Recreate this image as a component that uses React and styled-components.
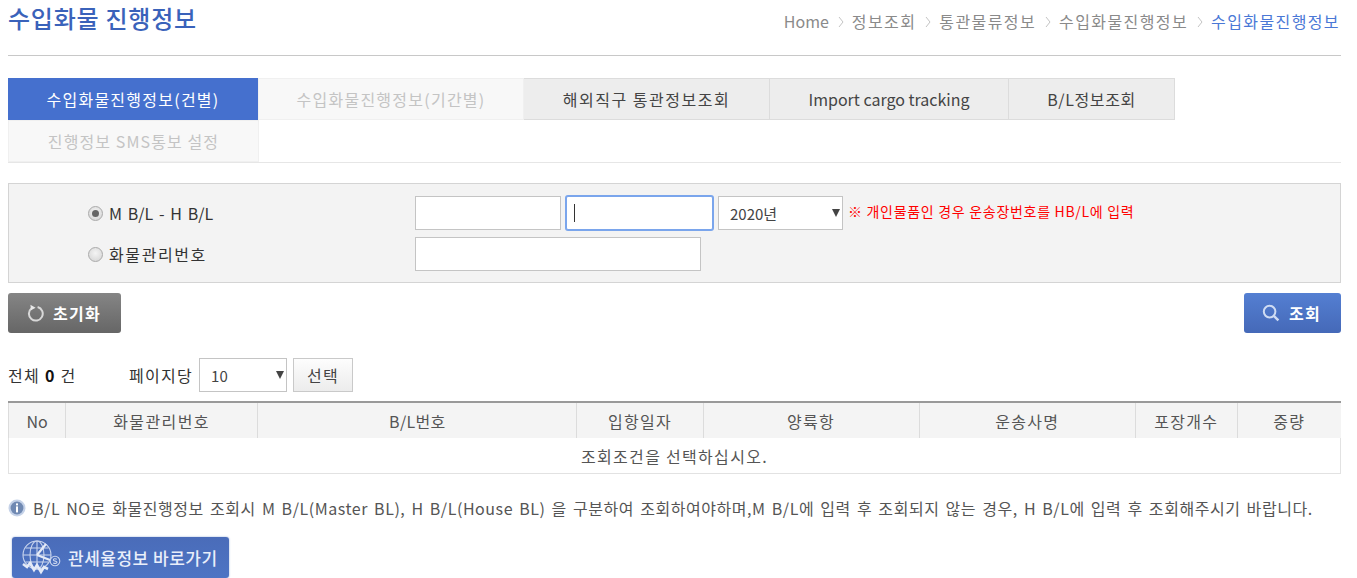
import styled, { createGlobalStyle } from "styled-components";

const tabs = [
  { label: "수입화물진행정보(건별)", width: 250, kind: "active", spacing: 1.25 },
  { label: "수입화물진행정보(기간별)", width: 266, kind: "off", spacing: 1.25 },
  { label: "해외직구 통관정보조회", width: 246, kind: "normal", spacing: 1.5 },
  { label: "Import cargo tracking", width: 239, kind: "normal", spacing: 0 },
  { label: "B/L정보조회", width: 166, kind: "normal", spacing: 0.6 },
  { label: "진행정보 SMS통보 설정", width: 251, kind: "off", spacing: 1.1 },
];

const columns = [
  { label: "No", width: 57, spacing: 0 },
  { label: "화물관리번호", width: 192, spacing: 1.4 },
  { label: "B/L번호", width: 319, spacing: 0.3 },
  { label: "입항일자", width: 126, spacing: 1.3 },
  { label: "양륙항", width: 216, spacing: 1.3 },
  { label: "운송사명", width: 216, spacing: 1.3 },
  { label: "포장개수", width: 102, spacing: 1.3 },
  { label: "중량", width: 103, spacing: 1.3 },
];

const crumbs = [
  { label: "Home", spacing: 0 },
  { label: "정보조회", spacing: 1.4 },
  { label: "통관물류정보", spacing: 1.4 },
  { label: "수입화물진행정보", spacing: 1.4 },
];

const App = () => {
  return (
    <>
      <GlobalStyle />
      <Page>
        <TitleBar>
          <Title>수입화물 진행정보</Title>
          <Breadcrumb>
            {crumbs.map((c) => (
              <Crumb key={c.label} $spacing={c.spacing}>
                {c.label}
                <Chevron viewBox="0 0 6 12">
                  <path d="M1 1l4 5-4 5" fill="none" stroke="#c4c4c4" strokeWidth="1" />
                </Chevron>
              </Crumb>
            ))}
            <CurrentCrumb>수입화물진행정보</CurrentCrumb>
          </Breadcrumb>
        </TitleBar>

        <TabList>
          {tabs.map((t) => (
            <Tab key={t.label} $width={t.width} $kind={t.kind} $spacing={t.spacing}>
              {t.label}
            </Tab>
          ))}
        </TabList>

        <SearchBox>
          <RadioColumn>
            <RadioLabel>
              <Radio type="radio" name="kind" defaultChecked />
              <LatinText>M B/L - H B/L</LatinText>
            </RadioLabel>
            <RadioLabel>
              <Radio type="radio" name="kind" />
              화물관리번호
            </RadioLabel>
          </RadioColumn>
          <FieldColumn>
            <FieldRow>
              <TextInput $width={146} />
              <FocusField>
                <TextInput $width={147} $focused />
                <Caret />
              </FocusField>
              <SelectWrap $width={125}>
                <Select defaultValue="2020">
                  <option value="2020">2020년</option>
                </Select>
              </SelectWrap>
              <Warning>※ 개인물품인 경우 운송장번호를 HB/L에 입력</Warning>
            </FieldRow>
            <FieldRow>
              <TextInput $width={286} />
            </FieldRow>
          </FieldColumn>
        </SearchBox>

        <ButtonRow>
          <ActionButton $variant="gray">
            <svg width="18" height="18" viewBox="0 0 18 18" fill="none">
              <path d="M5.6 4.2A6.9 6.9 0 1 0 11.6 3" stroke="#d8d8d8" strokeWidth="2" />
              <path d="M4.4 0.8l0.6 5.4 4.6-2.4z" fill="#e8e8e8" />
            </svg>
            초기화
          </ActionButton>
          <ActionButton $variant="blue">
            <svg width="18" height="18" viewBox="0 0 18 18" fill="none">
              <circle cx="7.6" cy="7.6" r="5.8" stroke="#cfdcf3" strokeWidth="2" />
              <path d="M11.8 11.8l4.6 4.6" stroke="#cfdcf3" strokeWidth="2.4" />
            </svg>
            조회
          </ActionButton>
        </ButtonRow>

        <CountRow>
          <Total>
            전체 <b>0</b> 건
          </Total>
          <PerPage>페이지당</PerPage>
          <SelectWrap $width={88}>
            <Select defaultValue="10">
              <option value="10">10</option>
            </Select>
          </SelectWrap>
          <PickButton>선택</PickButton>
        </CountRow>

        <Table>
          <thead>
            <tr>
              {columns.map((c) => (
                <Th key={c.label} $spacing={c.spacing} style={{ width: c.width }}>
                  {c.label}
                </Th>
              ))}
            </tr>
          </thead>
          <tbody>
            <tr>
              <Td colSpan={columns.length}>조회조건을 선택하십시오.</Td>
            </tr>
          </tbody>
        </Table>

        <Note>
          <svg width="18" height="18" viewBox="0 0 18 18">
            <circle cx="9" cy="9" r="8.5" fill="#c5d2e8" />
            <circle cx="9" cy="9" r="6.4" fill="#7089b2" />
            <rect x="8" y="4.4" width="2" height="2" fill="#fff" />
            <rect x="8" y="7.4" width="2" height="6" fill="#fff" />
          </svg>
          B/L NO로 화물진행정보 조회시 M B/L(Master BL), H B/L(House BL) 을 구분하여 조회하여야하며,M B/L에 입력 후 조회되지 않는 경우, H B/L에 입력 후 조회해주시기 바랍니다.
        </Note>

        <TariffLink>
          <svg width="40" height="36" viewBox="0 0 40 36" fill="none" stroke="#c9d5ee" strokeWidth="1.1">
            <circle cx="15" cy="15" r="14" />
            <ellipse cx="15" cy="15" rx="7" ry="14" />
            <path d="M1 15h28M3.5 8h23M3.5 22h23M15 1v28" />
            <path d="M15 15l9-11M15 15l13 5" strokeWidth="2.2" stroke="#e4eaf7" />
            <path d="M1 24l4 3 3-4 4 7 3-5 4 7 3-5 4 2" strokeWidth="2.6" stroke="#e4eaf7" />
            <circle cx="33" cy="21" r="4.8" fill="#4a6fbe" />
            <path d="M34.8 19.2c-1.8-1-3.6-.4-3.4.9.2 1.3 3.6.8 3.6 2.2 0 1.2-2 1.5-3.8.6" />
          </svg>
          관세율정보 바로가기
        </TariffLink>
      </Page>
    </>
  );
};

export default App;

const GlobalStyle = createGlobalStyle`
  html, body {
    margin: 0;
    padding: 0;
    background: #fff;
    overflow: hidden;
  }
  body {
    font-family: "Noto Sans CJK KR", "Noto Sans", sans-serif;
    font-size: 16px;
    letter-spacing: 1.3px;
    color: #333;
  }
`;

const Page = styled.div`
  width: 1333px;
  height: 578px;
  margin-left: 8px;
  overflow: hidden;
`;

const TitleBar = styled.header`
  height: 55px;
  border-bottom: 1px solid #c8c8c8;
  display: flex;
  justify-content: space-between;
  align-items: flex-start;
`;

const Title = styled.h1`
  margin: 0;
  font-size: 24px;
  line-height: normal;
  letter-spacing: 0.75px;
  font-weight: 500;
  color: #3a62ba;
`;

const Breadcrumb = styled.nav`
  display: flex;
  align-items: center;
  height: 42px;
  padding-right: 1px;
  color: #8a8a8a;
`;

const Crumb = styled.span`
  display: inline-flex;
  align-items: center;
  letter-spacing: ${(p) => p.$spacing}px;
`;

const Chevron = styled.svg`
  width: 6px;
  height: 12px;
  margin: 2px 8px 0 9px;
`;

const CurrentCrumb = styled.span`
  letter-spacing: 1.4px;
  color: #4a78d6;
`;

const TabList = styled.div`
  display: flex;
  flex-wrap: wrap;
  margin-top: 22px;
  height: 84px;
  border-bottom: 1px solid #e6e6e6;
`;

const tabColors = {
  active: "background:#4570ce;color:#fff;border-color:#4570ce;",
  off: "background:#f8f8f8;color:#c4c4c4;border-color:#f0f0f0;",
  normal: "background:#ededed;color:#444;border-color:#dcdcdc;",
};

const Tab = styled.div`
  width: ${(p) => p.$width}px;
  height: 42px;
  box-sizing: border-box;
  display: flex;
  align-items: center;
  justify-content: center;
  border: 1px solid;
  border-left-width: ${(p) => (p.$kind === "normal" ? 0 : 1)}px;
  letter-spacing: ${(p) => p.$spacing}px;
  ${(p) => tabColors[p.$kind]}
`;

const SearchBox = styled.section`
  height: 100px;
  box-sizing: border-box;
  margin-top: 20px;
  border: 1px solid #d4d4d4;
  background: #f3f3f3;
  display: flex;
  padding: 12px 0 0 79px;
`;

const RadioColumn = styled.div`
  width: 327px;
  display: flex;
  flex-direction: column;
  gap: 7px;
`;

const RadioLabel = styled.label`
  height: 34px;
  display: flex;
  align-items: center;
  gap: 6px;
  letter-spacing: 1.6px;
  color: #333;
`;

const LatinText = styled.span`
  letter-spacing: 0;
  word-spacing: 2.2px;
`;

const Radio = styled.input`
  appearance: none;
  width: 15px;
  height: 15px;
  margin: 0;
  border-radius: 50%;
  border: 1px solid #aaa;
  background: radial-gradient(circle at 50% 40%, #f4f4f4, #d2d2d2);
  position: relative;
  &:checked::after {
    content: "";
    position: absolute;
    left: 3px;
    top: 3px;
    width: 7px;
    height: 7px;
    border-radius: 50%;
    background: #666;
  }
`;

const FieldColumn = styled.div`
  display: flex;
  flex-direction: column;
  gap: 7px;
`;

const FieldRow = styled.div`
  display: flex;
  align-items: flex-start;
  gap: 5px;
`;

const TextInput = styled.input`
  width: ${(p) => p.$width}px;
  height: 34px;
  box-sizing: border-box;
  border: 1px solid ${(p) => (p.$focused ? "#7aa5ec" : "#c4c4c4")};
  box-shadow: ${(p) => (p.$focused ? "0 0 0 1px #7aa5ec" : "none")};
  border-radius: ${(p) => (p.$focused ? "2px" : "0")};
  background: #fff;
  outline: none;
  padding: 0 6px;
  caret-color: transparent;
`;

const FocusField = styled.div`
  position: relative;
  display: flex;
`;

const Caret = styled.span`
  position: absolute;
  left: 8px;
  top: 8px;
  width: 1px;
  height: 18px;
  background: #333;
`;

const SelectWrap = styled.div`
  position: relative;
  width: ${(p) => p.$width}px;
  height: 34px;
  &::after {
    content: "";
    position: absolute;
    right: 3px;
    top: 13px;
    border-left: 4px solid transparent;
    border-right: 4px solid transparent;
    border-top: 8px solid #444;
    pointer-events: none;
  }
`;

const Select = styled.select`
  appearance: none;
  width: 100%;
  height: 100%;
  box-sizing: border-box;
  border: 1px solid #c4c4c4;
  border-radius: 0;
  background: #fff;
  padding: 0 0 0 11px;
  font-family: inherit;
  font-size: 15px;
  letter-spacing: 0;
  color: #444;
  outline: none;
`;

const Warning = styled.span`
  font-size: 14px;
  line-height: 30px;
  letter-spacing: 0.7px;
  color: #f00;
`;

const ButtonRow = styled.div`
  display: flex;
  justify-content: space-between;
  margin-top: 10px;
`;

const ActionButton = styled.button`
  height: 40px;
  width: ${(p) => (p.$variant === "gray" ? 113 : 97)}px;
  border: 0;
  border-radius: 3px;
  padding: 0 2px 0 0;
  display: flex;
  align-items: center;
  justify-content: center;
  gap: 9px;
  font-family: inherit;
  font-size: 16px;
  letter-spacing: 1.3px;
  font-weight: 700;
  color: #fff;
  background: ${(p) =>
    p.$variant === "gray"
      ? "linear-gradient(#858585, #666)"
      : "linear-gradient(#547fd2, #4569b8)"};
`;

const CountRow = styled.div`
  display: flex;
  align-items: center;
  margin-top: 25px;
  height: 34px;
  color: #333;
`;

const Total = styled.span`
  width: 121px;
  b {
    color: #111;
  }
`;

const PerPage = styled.span`
  margin-right: 6px;
`;

const PickButton = styled.button`
  width: 60px;
  height: 34px;
  margin-left: 6px;
  border: 1px solid #c9c9c9;
  background: linear-gradient(#fdfdfd, #ececec);
  font-family: inherit;
  font-size: 16px;
  letter-spacing: 1.3px;
  color: #444;
`;

const Table = styled.table`
  width: 100%;
  margin-top: 9px;
  border-collapse: collapse;
  table-layout: fixed;
  border-top: 2px solid #999;
`;

const Th = styled.th`
  height: 36px;
  padding: 0;
  box-sizing: border-box;
  background: #f4f4f4;
  border-left: 1px solid #dcdcdc;
  font-weight: 400;
  letter-spacing: ${(p) => p.$spacing}px;
  color: #555;
`;

const Td = styled.td`
  height: 35px;
  padding: 0;
  text-align: center;
  color: #555;
  border: 1px solid #e2e2e2;
  border-top: 0;
`;

const Note = styled.p`
  margin: 24px 0 0;
  display: flex;
  align-items: center;
  gap: 7px;
  white-space: nowrap;
  line-height: 20px;
  letter-spacing: 0.55px;
  word-spacing: 2px;
  color: #555;
`;

const TariffLink = styled.a`
  margin: 19px 0 0 4px;
  width: 217px;
  height: 41px;
  box-sizing: border-box;
  padding-left: 10px;
  display: flex;
  align-items: center;
  gap: 6px;
  border-radius: 3px;
  background: linear-gradient(#4a6cb9, #4d74c4);
  box-shadow: 0 0 2px #8fa6d6;
  font-size: 17px;
  letter-spacing: 0.5px;
  font-weight: 500;
  color: #e9eefa;
`;
